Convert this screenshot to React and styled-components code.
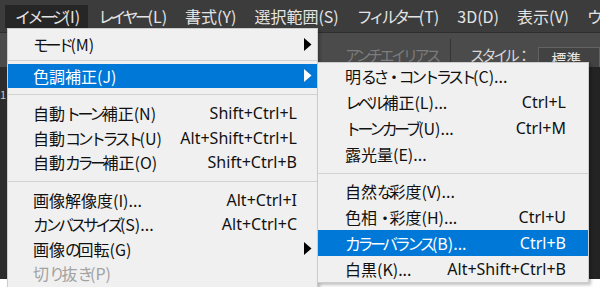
import React from "react";
import styled, { createGlobalStyle } from "styled-components";

const GlobalStyle = createGlobalStyle`
  html, body {
    margin: 0;
    padding: 0;
    background: #fff;
  }
  body {
    font-family: "Noto Sans CJK JP", "Noto Sans", sans-serif;
  }
`;

const Screen = styled.div`
  position: relative;
  width: 600px;
  height: 287px;
  overflow: hidden;
  background: #fff;
`;

// Kana in the Windows UI font are proportional; tighten the full-width ones
const Kana = styled.span`
  letter-spacing: -0.22em;
`;

function JpText({ children }) {
  const parts = children.split(/([\u3040-\u30ff\uff1a]+)/);
  return parts.map((p, i) => (i % 2 ? <Kana key={i}>{p}</Kana> : p));
}

// Photoshop window behind the menus
const Workspace = styled.div`
  height: 279px;
  display: flex;
  flex-direction: column;
  background: #2b2b2b;
`;

const MenuBar = styled.div`
  height: 33px;
  box-sizing: border-box;
  padding: 5px 0 0 5px;
  display: flex;
  align-items: flex-start;
  background: #3c3c3c;
  border-bottom: 1px solid #2e2e2e;
`;

const BarItem = styled.div`
  height: 23px;
  padding: 0 8px 0 10px;
  line-height: 22px;
  font-size: 16px;
  white-space: nowrap;
  color: #e4e4e4;
  background: ${(p) => (p.$active ? "#262626" : "transparent")};
`;

const OptionsBar = styled.div`
  height: 34px;
  box-sizing: border-box;
  padding: 12px 0 0 345px;
  display: flex;
  align-items: flex-start;
  background: #4b4b4b;
  font-size: 15px;
`;

const OptionLabel = styled.span`
  color: ${(p) => (p.$disabled ? "#7c7c7c" : "#d6d6d6")};
  white-space: nowrap;
  line-height: 20px;
`;

const OptionDivider = styled.div`
  width: 1px;
  height: 30px;
  margin: -6px 19px 0 12px;
  background: #343434;
`;

const SelectBox = styled.div`
  margin-left: 10px;
  margin-top: 2px;
  width: 80px;
  height: 26px;
  padding-left: 12px;
  box-sizing: border-box;
  border: 1px solid #626262;
  background: #424242;
  color: #e8e8e8;
  line-height: 22px;
`;

const WorkArea = styled.div`
  flex: 1;
  display: flex;
`;

const Ruler = styled.div`
  width: 7px;
  padding-top: 21px;
  background: #2c2c2c;
  color: #c8c8c8;
  font-size: 11px;
  line-height: 12px;
  overflow: hidden;
`;

const Canvas = styled.div`
  flex: 1;
  background: #232323;
`;

// Dropdown menus lie over the workspace
const Menu = styled.div`
  position: absolute;
  left: ${(p) => p.$left}px;
  top: ${(p) => p.$top}px;
  width: ${(p) => p.$width}px;
  box-sizing: border-box;
  padding: ${(p) => p.$pad};
  background: #f0f0f0;
  border: 1px solid #cdcdcd;
  box-shadow: 2px 2px 3px rgba(0, 0, 0, 0.25);
  font-size: 16px;
`;

const Item = styled.div`
  height: ${(p) => p.$h}px;
  display: flex;
  align-items: center;
  padding-left: ${(p) => p.$indent}px;
  white-space: nowrap;
  color: ${(p) => (p.$active ? "#fff" : p.$disabled ? "#a2a2a2" : "#111")};
  background: ${(p) => (p.$active ? "#0078d7" : "transparent")};
`;

const Label = styled.span`
  flex: 1;
`;

const Shortcut = styled.span`
  font-family: "Noto Sans", sans-serif;
  text-align: right;
`;

const ArrowSlot = styled.span`
  width: ${(p) => p.$w}px;
  display: flex;
  justify-content: flex-end;
  padding-right: 5px;
  box-sizing: border-box;
`;

const Separator = styled.div`
  padding: ${(p) => p.$pad};
  &::after {
    content: "";
    display: block;
    height: 1px;
    background: #d2d2d2;
  }
`;

function Arrow({ color }) {
  return (
    <svg width="8" height="13" viewBox="0 0 8 13">
      <polygon points="0,0 7.5,6.5 0,13" fill={color} />
    </svg>
  );
}

const barItems = [
  "イメージ(I)",
  "レイヤー(L)",
  "書式(Y)",
  "選択範囲(S)",
  "フィルター(T)",
  "3D(D)",
  "表示(V)",
  "ウィンドウ(W)",
];

const mainMenu = [
  { label: "モード(M)", sub: true },
  { sep: "3px 0 3px" },
  { label: "色調補正(J)", sub: true, active: true },
  { sep: "6px 0 6px" },
  { label: "自動トーン補正(N)", key: "Shift+Ctrl+L" },
  { label: "自動コントラスト(U)", key: "Alt+Shift+Ctrl+L" },
  { label: "自動カラー補正(O)", key: "Shift+Ctrl+B" },
  { sep: "6px 0 6px" },
  { label: "画像解像度(I)...", key: "Alt+Ctrl+I" },
  { label: "カンバスサイズ(S)...", key: "Alt+Ctrl+C" },
  { label: "画像の回転(G)", sub: true },
  { label: "切り抜き(P)", disabled: true },
];

const adjustMenu = [
  { label: "明るさ・コントラスト(C)..." },
  { label: "レベル補正(L)...", key: "Ctrl+L" },
  { label: "トーンカーブ(U)...", key: "Ctrl+M" },
  { label: "露光量(E)..." },
  { sep: "6px 0 4px" },
  { label: "自然な彩度(V)..." },
  { label: "色相・彩度(H)...", key: "Ctrl+U" },
  { label: "カラーバランス(B)...", key: "Ctrl+B", active: true },
  { label: "白黒(K)...", key: "Alt+Shift+Ctrl+B" },
];

function MenuList({ items, rowHeight, indent, arrowWidth }) {
  return items.map((it, i) =>
    it.sep ? (
      <Separator key={i} $pad={it.sep} />
    ) : (
      <Item
        key={i}
        $h={rowHeight}
        $indent={indent}
        $active={it.active}
        $disabled={it.disabled}
      >
        <Label>
          <JpText>{it.label}</JpText>
        </Label>
        {it.key && <Shortcut>{it.key}</Shortcut>}
        <ArrowSlot $w={arrowWidth}>
          {it.sub && <Arrow color={it.active ? "#fff" : "#000"} />}
        </ArrowSlot>
      </Item>
    )
  );
}

export default function App() {
  return (
    <Screen>
      <GlobalStyle />
      <Workspace>
        <MenuBar>
          {barItems.map((t, i) => (
            <BarItem key={t} $active={i === 0}>
              <JpText>{t}</JpText>
            </BarItem>
          ))}
        </MenuBar>
        <OptionsBar>
          <OptionLabel $disabled>
            <JpText>アンチエイリアス</JpText>
          </OptionLabel>
          <OptionDivider />
          <OptionLabel>
            <JpText>スタイル：</JpText>
          </OptionLabel>
          <SelectBox>標準</SelectBox>
        </OptionsBar>
        <WorkArea>
          <Ruler>1</Ruler>
          <Canvas />
        </WorkArea>
      </Workspace>

      <Menu $left={7} $top={28} $width={311} $pad="3px 0">
        <MenuList items={mainMenu} rowHeight={24.5} indent={25} arrowWidth={20} />
      </Menu>

      <Menu $left={317} $top={62} $width={272} $pad="0">
        <MenuList items={adjustMenu} rowHeight={26} indent={27} arrowWidth={22} />
      </Menu>
    </Screen>
  );
}
